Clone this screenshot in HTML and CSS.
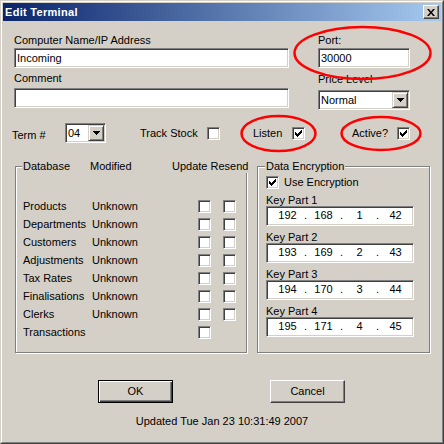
FILE: index.html
```html
<!DOCTYPE html>
<html>
<head>
<meta charset="utf-8">
<title>Edit Terminal</title>
<link rel="stylesheet" href="styles.css">
</head>
<body>
<div class="window">
  <div class="frame">
    <div class="titlebar">
      <span class="title">Edit Terminal</span>
      <span class="close"><svg width="8" height="7" viewBox="0 0 8 7"><path d="M0 0h2l2 2.5l2-2.5h2l-3 3.5l3 3.5h-2l-2-2.5l-2 2.5h-2l3-3.5z" fill="#000"/></svg></span>
    </div>
    <div class="client">
      <div class="top">
        <div class="col-left">
          <div class="label">Computer Name/IP Address</div>
          <div class="field">Incoming</div>
          <div class="label l2">Comment</div>
          <div class="field f2"></div>
        </div>
        <div class="col-right">
          <div class="label">Port:</div>
          <div class="field">30000</div>
          <div class="label l3">Price Level</div>
          <div class="combo price"><span class="combo-text">Normal</span><span class="drop"><svg width="7" height="4" viewBox="0 0 7 4"><path d="M0 0h7v1h-1v1h-1v1h-1v1h-1v-1h-1v-1h-1v-1h-1z" fill="#000"/></svg></span></div>
        </div>
      </div>

      <div class="opts">
        <span class="term-label">Term #</span>
        <div class="combo term"><span class="combo-text">04</span><span class="drop"><svg width="7" height="4" viewBox="0 0 7 4"><path d="M0 0h7v1h-1v1h-1v1h-1v1h-1v-1h-1v-1h-1v-1h-1z" fill="#000"/></svg></span></div>
        <span class="opt-label track">Track Stock</span>
        <span class="cb"></span>
        <span class="opt-label listen">Listen</span>
        <span class="cb"><svg class="chk" width="7" height="7" viewBox="0 0 7 7"><path d="M0 2h1v3h-1z M1 3h1v3h-1z M2 4h1v3h-1z M3 3h1v3h-1z M4 2h1v3h-1z M5 1h1v3h-1z M6 0h1v3h-1z" fill="#000"/></svg></span>
        <span class="opt-label active">Active?</span>
        <span class="cb"><svg class="chk" width="7" height="7" viewBox="0 0 7 7"><path d="M0 2h1v3h-1z M1 3h1v3h-1z M2 4h1v3h-1z M3 3h1v3h-1z M4 2h1v3h-1z M5 1h1v3h-1z M6 0h1v3h-1z" fill="#000"/></svg></span>
      </div>

      <div class="groups">
        <div class="group db">
          <div class="db-head">
            <span class="name">Database</span>
            <span class="h-mod">Modified</span>
            <span>Update Resend</span>
          </div>
          <div class="db-rows">
            <div class="db-row"><span class="name">Products</span><span class="mod">Unknown</span><span class="cb"></span><span class="cb cb2"></span></div>
            <div class="db-row"><span class="name">Departments</span><span class="mod">Unknown</span><span class="cb"></span><span class="cb cb2"></span></div>
            <div class="db-row"><span class="name">Customers</span><span class="mod">Unknown</span><span class="cb"></span><span class="cb cb2"></span></div>
            <div class="db-row"><span class="name">Adjustments</span><span class="mod">Unknown</span><span class="cb"></span><span class="cb cb2"></span></div>
            <div class="db-row"><span class="name">Tax Rates</span><span class="mod">Unknown</span><span class="cb"></span><span class="cb cb2"></span></div>
            <div class="db-row"><span class="name">Finalisations</span><span class="mod">Unknown</span><span class="cb"></span><span class="cb cb2"></span></div>
            <div class="db-row"><span class="name">Clerks</span><span class="mod">Unknown</span><span class="cb"></span><span class="cb cb2"></span></div>
            <div class="db-row"><span class="name">Transactions</span><span class="mod"></span><span class="cb"></span></div>
          </div>
        </div>

        <div class="group enc">
          <div class="enc-head">Data Encryption</div>
          <div class="use">
            <span class="cb"><svg class="chk" width="7" height="7" viewBox="0 0 7 7"><path d="M0 2h1v3h-1z M1 3h1v3h-1z M2 4h1v3h-1z M3 3h1v3h-1z M4 2h1v3h-1z M5 1h1v3h-1z M6 0h1v3h-1z" fill="#000"/></svg></span>
            <span class="use-text">Use Encryption</span>
          </div>
          <div class="key-label">Key Part 1</div>
          <div class="ip"><span class="seg">192</span><span class="dot">.</span><span class="seg">168</span><span class="dot">.</span><span class="seg">1</span><span class="dot">.</span><span class="seg">42</span></div>
          <div class="key-label">Key Part 2</div>
          <div class="ip"><span class="seg">193</span><span class="dot">.</span><span class="seg">169</span><span class="dot">.</span><span class="seg">2</span><span class="dot">.</span><span class="seg">43</span></div>
          <div class="key-label">Key Part 3</div>
          <div class="ip"><span class="seg">194</span><span class="dot">.</span><span class="seg">170</span><span class="dot">.</span><span class="seg">3</span><span class="dot">.</span><span class="seg">44</span></div>
          <div class="key-label">Key Part 4</div>
          <div class="ip"><span class="seg">195</span><span class="dot">.</span><span class="seg">171</span><span class="dot">.</span><span class="seg">4</span><span class="dot">.</span><span class="seg">45</span></div>
        </div>
      </div>

      <div class="buttons">
        <div class="btn default">OK</div>
        <div class="btn cancel">Cancel</div>
      </div>
      <div class="status">Updated Tue Jan 23 10:31:49 2007</div>
    </div>
  </div>
</div>
<svg class="marks" width="444" height="444" viewBox="0 0 444 444">
  <ellipse cx="362.5" cy="53" rx="68" ry="26" fill="none" stroke="#ff0000" stroke-width="2.5"/>
  <ellipse cx="278.5" cy="133.5" rx="37" ry="17.5" fill="none" stroke="#ff0000" stroke-width="2.5"/>
  <ellipse cx="381" cy="133.5" rx="39.5" ry="16.5" fill="none" stroke="#ff0000" stroke-width="2.5"/>
</svg>
</body>
</html>
```

FILE: styles.css
```css
* { box-sizing: border-box; }
html, body { margin: 0; padding: 0; }
body {
  position: relative;
  width: 444px;
  height: 444px;
  overflow: hidden;
  font-family: "Liberation Sans", Arial, sans-serif;
  font-size: 11px;
  line-height: 13px;
  color: #000;
  background: #d4d0c8;
}
.window {
  width: 444px;
  height: 444px;
  border: 1px solid;
  border-color: #d4d0c8 #404040 #404040 #d4d0c8;
  background: #d4d0c8;
}
.frame {
  height: 100%;
  border: 1px solid;
  border-color: #fff #808080 #808080 #fff;
  padding: 1px;
  display: flex;
  flex-direction: column;
}
.titlebar {
  flex: none;
  height: 18px;
  display: flex;
  align-items: center;
  padding-left: 2px;
  background: linear-gradient(to right, #0a246a, #a6caf0);
}
.title {
  color: #fff;
  font-weight: bold;
  font-size: 11px;
  letter-spacing: 0.3px;
}
.close {
  margin-left: auto;
  margin-right: 2px;
  width: 16px;
  height: 14px;
  background: #d4d0c8;
  border: 1px solid;
  border-color: #fff #404040 #404040 #fff;
  box-shadow: inset -1px -1px #808080;
  display: flex;
  align-items: center;
  justify-content: center;
}
.close svg { display: block; }
.client {
  flex: 1;
  display: flex;
  flex-direction: column;
}

/* sunken controls */
.field, .combo, .cb, .ip {
  background: #fff;
  border: 1px solid;
  border-color: #808080 #fff #fff #808080;
  box-shadow: inset 1px 1px #404040, inset -1px -1px #d4d0c8;
}

.top {
  display: flex;
  padding-top: 13px;
  padding-left: 11px;
}
.col-left { width: 275px; }
.col-right { width: 92px; margin-left: 29px; }
.label { height: 13px; white-space: nowrap; }
.l2 { margin-top: 4px; }
.l3 { margin-top: 5px; }
.field {
  height: 20px;
  margin-top: 1px;
  padding: 1px 2px;
  line-height: 16px;
  white-space: nowrap;
}
.f2 { margin-top: 3px; }

.combo {
  height: 20px;
  padding: 1px;
  display: flex;
}
.price { margin-top: 4px; }
.combo-text {
  flex: 1;
  padding-left: 1px;
  line-height: 16px;
}
.drop {
  width: 16px;
  height: 16px;
  background: #d4d0c8;
  border: 1px solid;
  border-color: #d4d0c8 #404040 #404040 #d4d0c8;
  box-shadow: inset 1px 1px #fff, inset -1px -1px #808080;
  display: flex;
  align-items: center;
  justify-content: center;
}
.drop svg { display: block; }

.opts {
  display: flex;
  align-items: center;
  height: 20px;
  margin-top: 13px;
  margin-left: 9px;
}
.term-label { width: 53px; padding-top: 4px; }
.term { width: 41px; }
.opt-label { white-space: nowrap; }
.track { margin-left: 34px; width: 67px; }
.listen { margin-left: 33px; width: 39px; }
.active { margin-left: 47px; width: 45px; }

.cb {
  flex: none;
  width: 13px;
  height: 13px;
  display: flex;
  align-items: center;
  justify-content: center;
}
.chk { display: block; }

.groups {
  display: flex;
  align-items: flex-start;
  margin-top: 23px;
  margin-left: 12px;
}
.group {
  height: 187px;
  border: 1px solid #808080;
  box-shadow: inset 1px 1px #fff, 1px 1px #fff;
}
.db { width: 232px; }
.db-head {
  display: flex;
  height: 14px;
  margin: -8px -3px 0 6px;
  padding: 1px 0 0 1px;
  background: #d4d0c8;
  white-space: nowrap;
}
.db-head .name { width: 67px; }
.h-mod { width: 82px; }
.db-rows { margin-top: 24px; }
.db-row {
  display: flex;
  align-items: center;
  height: 18px;
  padding-left: 7px;
}
.db-row .name { width: 69px; white-space: nowrap; }
.mod { width: 106px; }
.cb2 { margin-left: 12px; }

.enc {
  width: 173px;
  margin-left: 10px;
  display: flex;
  flex-direction: column;
}
.enc-head {
  align-self: flex-start;
  height: 14px;
  margin: -8px 0 0 7px;
  padding: 1px 1px 0;
  background: #d4d0c8;
  white-space: nowrap;
}
.use {
  display: flex;
  align-items: center;
  height: 13px;
  margin: 3px 0 0 8px;
}
.use-text { margin-left: 5px; }
.key-label {
  height: 11px;
  line-height: 11px;
  margin: 6px 0 0 8px;
}
.ip {
  width: 148px;
  height: 20px;
  margin-left: 8px;
  padding-left: 5px;
  display: flex;
  line-height: 17px;
}
.seg { width: 31px; text-align: center; }
.dot { width: 5px; text-align: center; }

.buttons {
  display: flex;
  margin-top: 27px;
  margin-left: 95px;
}
.btn {
  width: 75px;
  height: 23px;
  display: flex;
  align-items: center;
  justify-content: center;
  background: #d4d0c8;
  border: 1px solid;
  border-color: #fff #404040 #404040 #fff;
  box-shadow: inset -1px -1px #808080;
}
.btn.default {
  border-color: #000;
  box-shadow: inset 1px 1px #fff, inset -1px -1px #404040, inset -2px -2px #808080;
}
.cancel { margin-left: 97px; }
.status {
  margin-top: 12px;
  text-align: center;
}

.marks {
  position: absolute;
  left: 0;
  top: 0;
  pointer-events: none;
}
```
